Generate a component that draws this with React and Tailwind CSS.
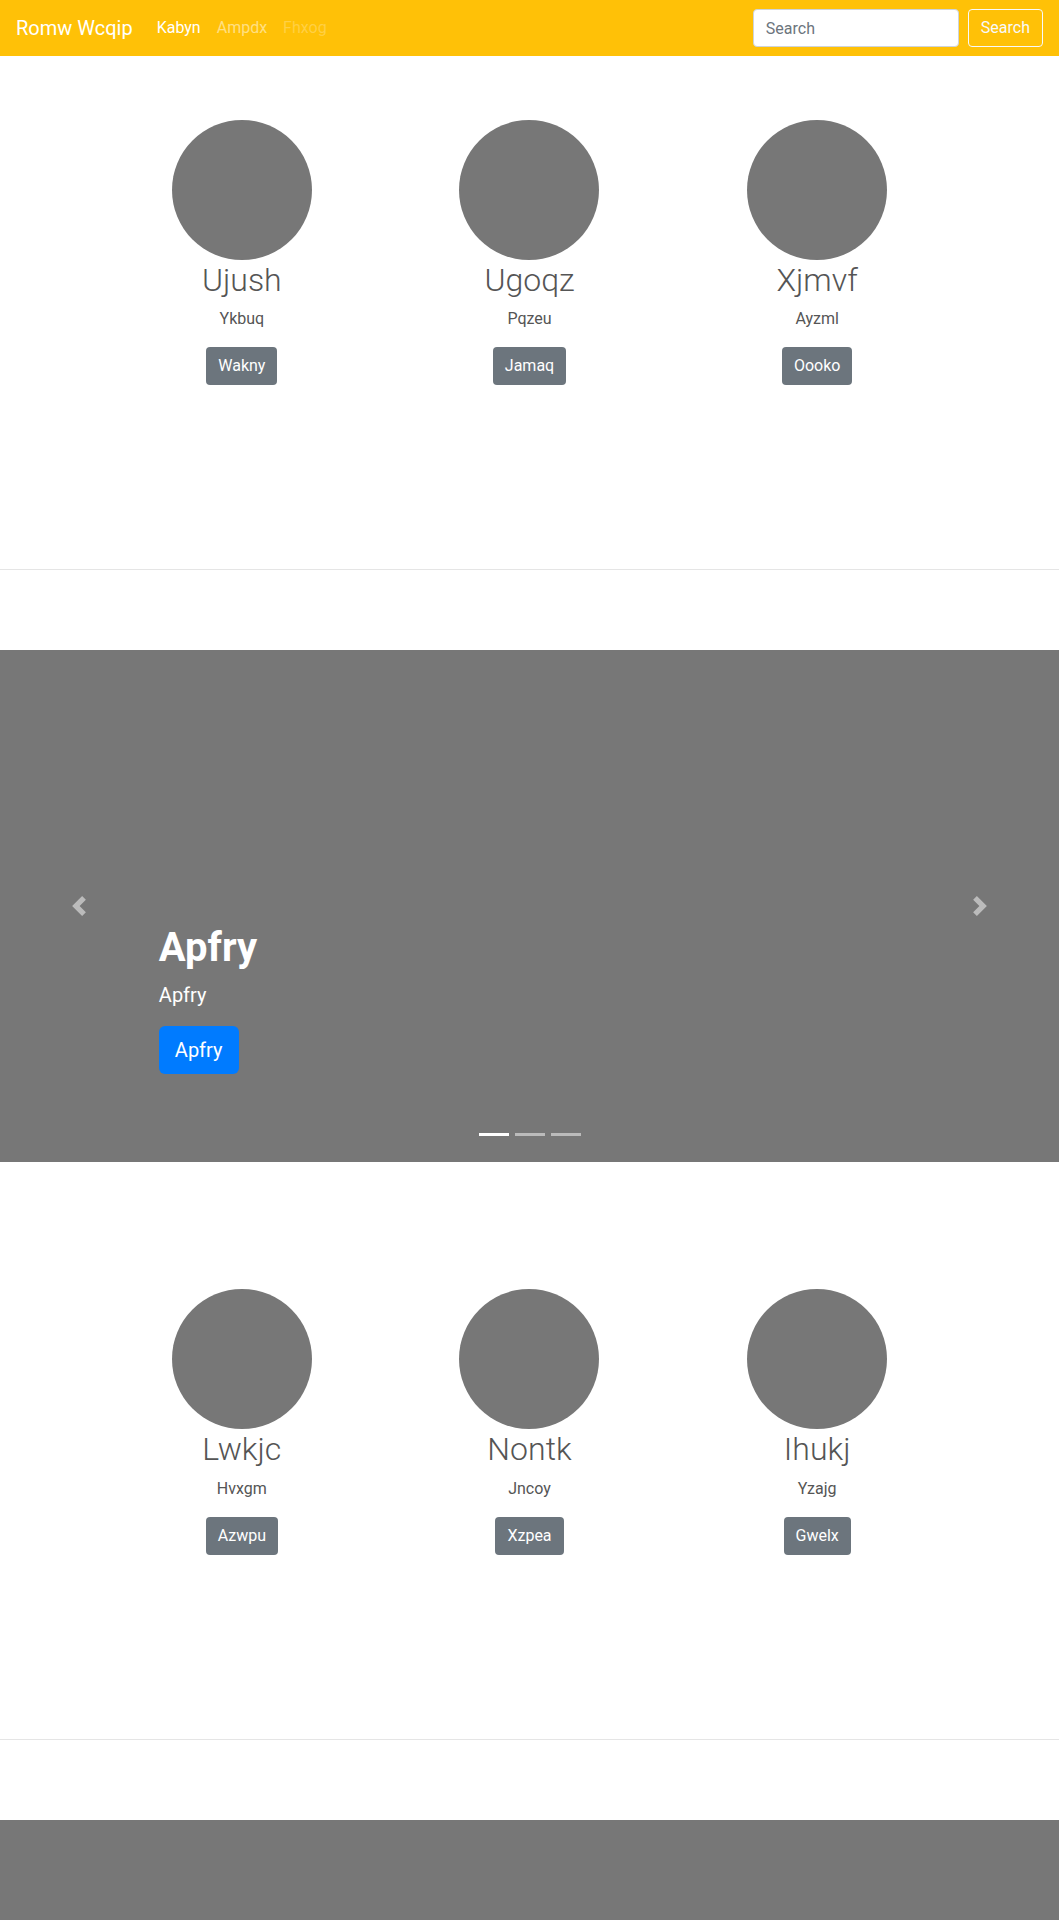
import React from 'react';

const firstRow = [
  { title: 'Ujush', text: 'Ykbuq', action: 'Wakny' },
  { title: 'Ugoqz', text: 'Pqzeu', action: 'Jamaq' },
  { title: 'Xjmvf', text: 'Ayzml', action: 'Oooko' },
];

const secondRow = [
  { title: 'Lwkjc', text: 'Hvxgm', action: 'Azwpu' },
  { title: 'Nontk', text: 'Jncoy', action: 'Xzpea' },
  { title: 'Ihukj', text: 'Yzajg', action: 'Gwelx' },
];

const Navbar = () => (
  <nav className="h-14 bg-[#ffc107] flex items-center px-4">
    <a href="#" className="text-xl leading-[30px] text-white mr-4">Romw Wcqip</a>
    <ul className="flex items-center">
      <li><a href="#" className="block px-2 py-2 text-base text-white">Kabyn</a></li>
      <li><a href="#" className="block px-2 py-2 text-base text-white/50">Ampdx</a></li>
      <li><span className="block px-2 py-2 text-base text-white/25">Fhxog</span></li>
    </ul>
    <form className="ml-auto flex items-center gap-[9px]" onSubmit={e => e.preventDefault()}>
      <input
        type="text"
        placeholder="Search"
        className="w-[206px] h-[38px] px-3 text-base bg-white border border-[#ced4da] rounded placeholder-[#6c757d] text-[#495057] outline-none"
      />
      <button className="h-[38px] px-3 text-base text-[#f8f9fa] border border-[#f8f9fa] rounded">
        Search
      </button>
    </form>
  </nav>
);

const Marketing = ({ items, top }) => (
  <section className={top}>
    <div className="w-[863px] mx-auto grid grid-cols-3">
      {items.map(item => (
        <div key={item.title} className="flex flex-col items-center text-center">
          <div className="w-[140px] h-[140px] rounded-full bg-[#777]"></div>
          <h2 className="text-[32px] leading-[1.2] font-light text-[#555] mt-[1px] mb-2">{item.title}</h2>
          <p className="text-base leading-6 text-[#555] mb-4">{item.text}</p>
          <a href="#" className="h-[38px] px-3 flex items-center text-base text-white bg-[#6c757d] rounded">
            {item.action}
          </a>
        </div>
      ))}
    </div>
  </section>
);

const Carousel = ({ caption }) => (
  <div className="relative h-[512px] bg-[#777] flex flex-col justify-end pl-[15%] pb-[72px]">
    {caption && (
      <>
        <h1 className="text-[40px] leading-[1.2] font-bold text-white mb-2">{caption}</h1>
        <p className="text-xl leading-[30px] text-white mb-4">{caption}</p>
        <div className="mb-4">
          <a href="#" className="inline-flex h-12 px-4 items-center text-xl text-white bg-[#007bff] rounded-md">
            {caption}
          </a>
        </div>
        {/* controls */}
        <a href="#" className="absolute left-0 top-0 bottom-0 w-[15%] flex items-center justify-center">
          <svg className="w-5 h-5 opacity-50" viewBox="0 0 8 8" fill="#fff">
            <path d="M5.25 0l-4 4 4 4 1.5-1.5L4.25 4l2.5-2.5L5.25 0z" />
          </svg>
        </a>
        <a href="#" className="absolute right-0 top-0 bottom-0 w-[15%] flex items-center justify-center">
          <svg className="w-5 h-5 opacity-50" viewBox="0 0 8 8" fill="#fff">
            <path d="M2.75 0l-1.5 1.5L3.75 4l-2.5 2.5L2.75 8l4-4-4-4z" />
          </svg>
        </a>
        <ol className="absolute left-0 right-0 bottom-[26px] flex justify-center gap-[6px]">
          <li className="w-[30px] h-[3px] bg-white"></li>
          <li className="w-[30px] h-[3px] bg-white/50"></li>
          <li className="w-[30px] h-[3px] bg-white/50"></li>
        </ol>
      </>
    )}
  </div>
);

export default function App() {
  return (
    <div className="min-h-screen bg-white font-['Roboto',sans-serif] overflow-hidden">
      <Navbar />
      <Marketing items={firstRow} top="pt-16" />
      <hr className="mt-[184px] border-0 border-t border-[#e5e5e5]" />
      <div className="mt-20">
        <Carousel caption="Apfry" />
      </div>
      <Marketing items={secondRow} top="pt-[127px]" />
      <hr className="mt-[184px] border-0 border-t border-[#e5e5e5]" />
      <div className="mt-20">
        <Carousel />
      </div>
    </div>
  );
}
